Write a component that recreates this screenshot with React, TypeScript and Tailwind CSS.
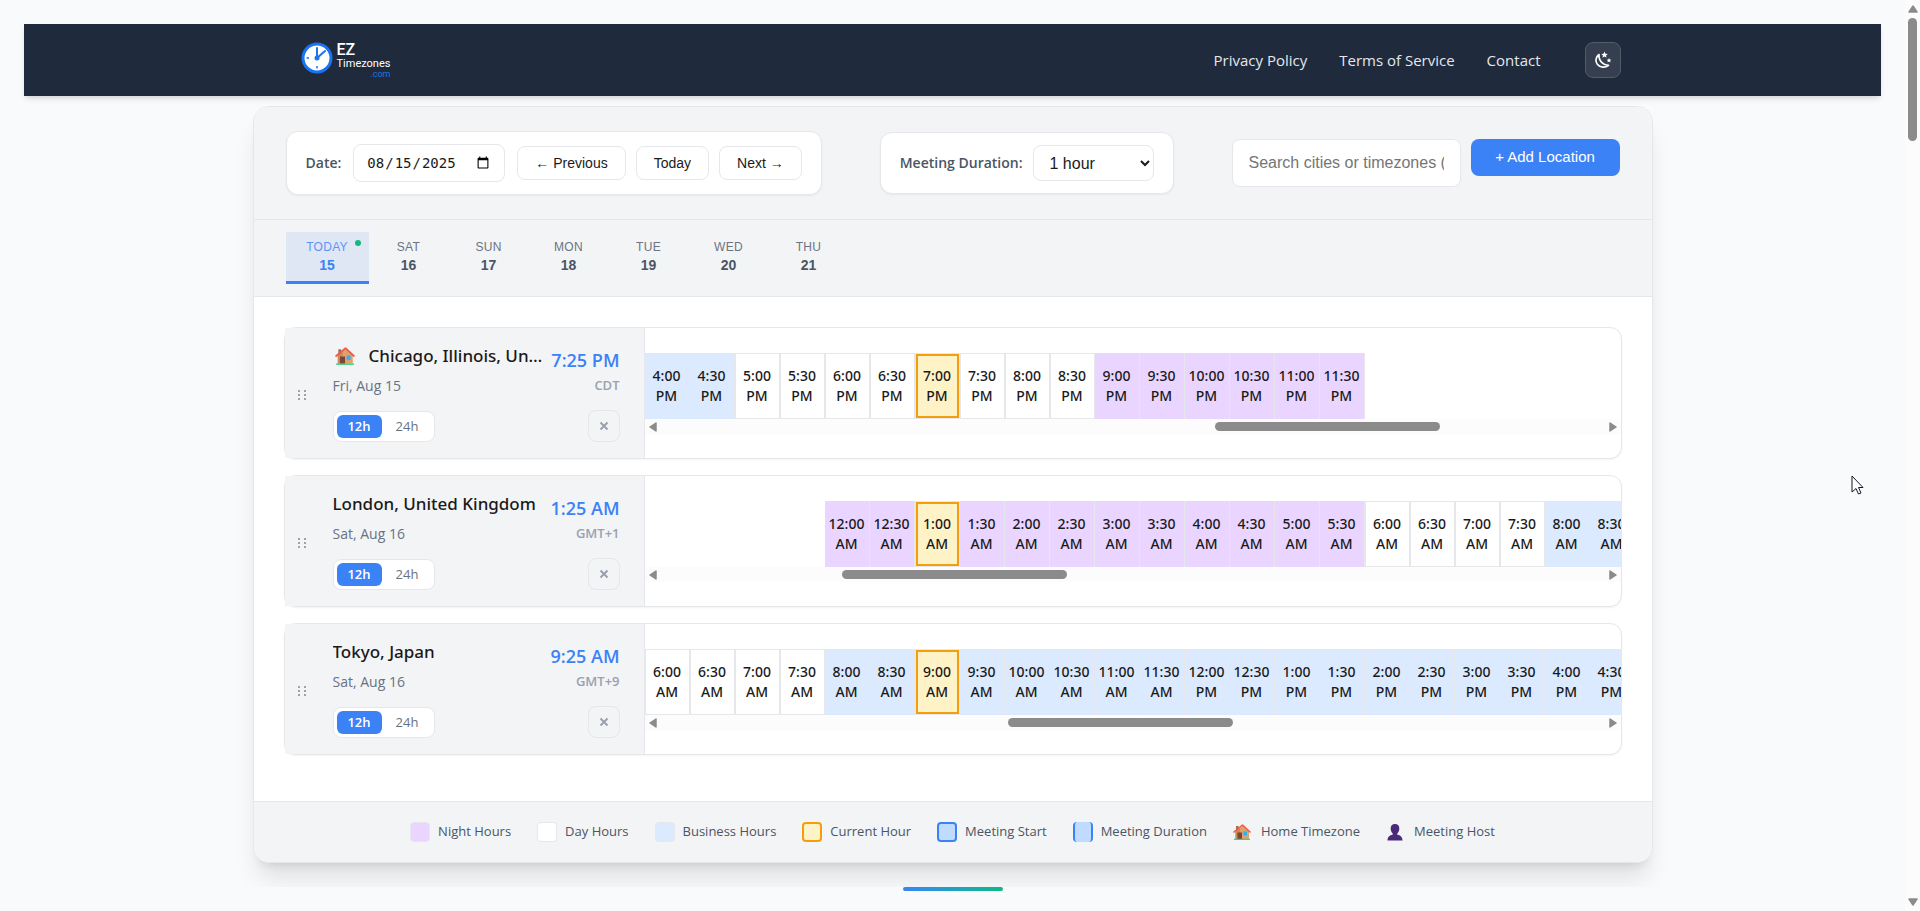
import type { ReactNode } from "react";

type SlotKind = "night" | "day" | "business" | "current";

interface Slot {
  time: string;
  period: string;
  kind: SlotKind;
}

interface Location {
  name: string;
  date: string;
  time: string;
  zone: string;
  home?: boolean;
  lead: number;
  start: number;
  count: number;
  current: number;
  thumb: { left: string; width: string };
}

const days = [
  { label: "Today", day: 15, active: true },
  { label: "Sat", day: 16 },
  { label: "Sun", day: 17 },
  { label: "Mon", day: 18 },
  { label: "Tue", day: 19 },
  { label: "Wed", day: 20 },
  { label: "Thu", day: 21 },
];

// start, count and current are in half hours since midnight
const locations: Location[] = [
  { name: "Chicago, Illinois, United States", date: "Fri, Aug 15", time: "7:25 PM", zone: "CDT", home: true, lead: 0, start: 32, count: 16, current: 38, thumb: { left: "58.7%", width: "23.7%" } },
  { name: "London, United Kingdom", date: "Sat, Aug 16", time: "1:25 AM", zone: "GMT+1", lead: 4, start: 0, count: 18, current: 2, thumb: { left: "19.4%", width: "23.7%" } },
  { name: "Tokyo, Japan", date: "Sat, Aug 16", time: "9:25 AM", zone: "GMT+9", lead: 0, start: 12, count: 22, current: 18, thumb: { left: "36.9%", width: "23.7%" } },
];

const slotStyles: Record<SlotKind, string> = {
  night: "border-r bg-[#e9d5ff]",
  business: "border-r bg-[#dbeafe]",
  day: "border bg-white",
  current: "border bg-[#fef3c7] inset-ring-2 inset-ring-[#f59e0b]",
};

function buildSlots({ start, count, current }: Location): Slot[] {
  return Array.from({ length: count }, (_, i) => {
    const half = start + i;
    const hour = Math.floor(half / 2);
    let kind: SlotKind = "day";
    if (half === current) kind = "current";
    else if (hour < 6 || hour >= 21) kind = "night";
    else if (hour >= 8 && hour < 17) kind = "business";
    return { time: `${hour % 12 || 12}:${half % 2 ? "30" : "00"}`, period: hour < 12 ? "AM" : "PM", kind };
  });
}

function HouseIcon({ className }: { className?: string }) {
  return (
    <svg viewBox="0 0 18 18" className={className} aria-hidden="true">
      <path d="M3 3h2.500v5H3z" fill="#a5694f" />
      <path d="M2.500 8.500 10 2.500l6 6V16H2.500z" fill="#e0a070" />
      <path d="M2.500 8.500 7 5v11H2.500z" fill="#c98a5e" />
      <path d="M4.500 9.500h4.500V16H4.500z" fill="#7d4533" />
      <path d="M10.500 8.500H14v4h-3.500z" fill="#28b4f0" />
      <path d="M1 9 9.500 2l7.500 7" fill="none" stroke="#ef5b45" strokeWidth="1.600" strokeLinecap="round" strokeLinejoin="round" />
      <path d="M1 15.700h16V17H1z" fill="#3fd07f" />
    </svg>
  );
}

function PersonIcon({ className }: { className?: string }) {
  return (
    <svg viewBox="0 0 18 18" className={className} aria-hidden="true">
      <path d="M9 1c2.900 0 4.300 1.700 4.300 4.500 0 2-.7 3.900-2 4.900v1.400c3 .6 5.200 2 5.200 5.700h-15c0-3.700 2.200-5.100 5.200-5.700v-1.400c-1.300-1-2-2.900-2-4.900C4.700 2.700 6.100 1 9 1z" fill="#4b2a78" />
    </svg>
  );
}

function Logo() {
  return (
    <a href="#" className="flex items-center gap-1 pl-4 font-['Roboto',sans-serif]">
      <svg viewBox="0 0 32 32" className="mb-1 size-8" aria-hidden="true">
        <circle cx="16" cy="16" r="14" fill="#fff" stroke="#1a73f0" strokeWidth="3" />
        <path d="M16 6v10l8-7" fill="none" stroke="#1a73f0" strokeWidth="2" strokeLinecap="round" />
        <circle cx="16" cy="16" r="2.500" fill="#1a73f0" />
        <path d="M5.500 16H8M16 24v2.500" stroke="#1a73f0" strokeWidth="1.500" />
      </svg>
      <span className="flex flex-col text-white">
        <span className="text-base leading-4 font-medium">EZ</span>
        <span className="text-[11px] leading-3">Timezones</span>
        <span className="self-end text-[9px] leading-2 text-[#1a73f0]">.com</span>
      </span>
    </a>
  );
}

function Header() {
  return (
    <header className="bg-[#1f2a3c] shadow-md">
      <div className="mx-auto flex h-18 max-w-[1400px] items-center justify-between px-8">
        <Logo />
        <nav className="flex items-center gap-8 text-[15px] text-[#e5e7eb]">
          <a href="#">Privacy Policy</a>
          <a href="#">Terms of Service</a>
          <a href="#">Contact</a>
          <button type="button" aria-label="Toggle dark mode" className="ml-3 flex size-9 items-center justify-center rounded-lg border border-[#525b69] bg-[#353f4f] text-white">
            <svg viewBox="0 0 20 20" className="size-5" fill="none" stroke="currentColor" strokeWidth="1.700" strokeLinejoin="round" aria-hidden="true">
              <path d="M6 4.500C2.500 7 2 11.500 4.500 14.500s7.500 3.500 11 .8C10.500 15.500 5.500 11 6 4.500z" />
              <path d="m11.500 1.500.9 2.200 2.400.2-1.800 1.600.5 2.300-2-1.200-2 1.200.5-2.300-1.800-1.600 2.400-.2zM16 8l.7 1.600 1.700.1-1.300 1.100.4 1.700-1.500-.9-1.500.9.4-1.700-1.300-1.100 1.700-.1z" fill="currentColor" strokeWidth="0" />
            </svg>
          </button>
        </nav>
      </div>
    </header>
  );
}

function NavButton({ children }: { children: ReactNode }) {
  return (
    <button type="button" className="h-[34px] rounded-lg border border-gray-200 bg-white px-[17px] font-['Liberation_Sans',sans-serif] text-sm text-[#1a1a1a]">
      {children}
    </button>
  );
}

function Controls() {
  return (
    <div className="flex flex-wrap items-center justify-between gap-4 border-b border-gray-200 px-8 py-6">
      <div className="flex items-center rounded-xl border border-gray-200 bg-white px-[19px] py-3 shadow-xs">
        <label htmlFor="date" className="mr-3 text-sm font-semibold text-gray-600">Date:</label>
        <input id="date" type="date" defaultValue="2025-08-15" className="mr-3 h-[38px] w-[152px] rounded-lg border border-gray-200 px-3 font-['DejaVu_Sans_Mono',monospace] text-sm text-[#1a1a1a]" />
        <div className="flex gap-2.5">
          <NavButton>← Previous</NavButton>
          <NavButton>Today</NavButton>
          <NavButton>Next →</NavButton>
        </div>
      </div>
      <div className="flex items-center gap-2.5 rounded-xl border border-gray-200 bg-white px-[19px] py-3 shadow-xs">
        <label htmlFor="duration" className="text-sm font-semibold text-gray-600">Meeting Duration:</label>
        <select id="duration" className="h-9 w-[121px] rounded-lg border border-gray-200 bg-white px-3 font-['Liberation_Sans',sans-serif] text-base text-[#1a1a1a]">
          <option>1 hour</option>
          <option>2 hours</option>
        </select>
      </div>
      <div className="flex items-start gap-2.5 font-['Liberation_Sans',sans-serif]">
        <input aria-label="Search locations" placeholder="Search cities or timezones (e.g. London)" className="h-12 w-[229px] rounded-lg border border-gray-200 bg-white px-4 text-base placeholder:text-[#757575]" />
        <button type="button" className="h-[37px] w-[149px] rounded-lg bg-[#3b82f6] text-[15px] text-white">+ Add Location</button>
      </div>
    </div>
  );
}

function DayTabs() {
  return (
    <div className="flex border-b border-gray-200 px-8 py-3 font-['Liberation_Sans',sans-serif]">
      {days.map(({ label, day, active }) => (
        <button
          key={day}
          type="button"
          className={`relative flex h-[52px] flex-col items-center border-b-3 pt-1.5 ${active ? "w-[83px] border-[#3b82f6] bg-[#dfe7f5] text-[#3b82f6]" : "w-20 border-transparent text-gray-600"}`}
        >
          <span className="text-xs leading-[18px] tracking-wide uppercase opacity-80">{label}</span>
          <span className="text-sm leading-[18px] font-bold">{day}</span>
          {active ? <span className="absolute top-2 right-2 size-1.5 rounded-full bg-[#10b981]" /> : null}
        </button>
      ))}
    </div>
  );
}

function Arrow({ className, d }: { className?: string; d: string }) {
  return (
    <svg viewBox="0 0 10 10" className={`size-2.5 shrink-0 ${className ?? ""}`} aria-hidden="true">
      <path d={d} fill="#8b8b8b" stroke="#8b8b8b" strokeWidth="1.500" strokeLinejoin="round" />
    </svg>
  );
}

function Timeline({ location }: { location: Location }) {
  return (
    <div className="min-w-0 flex-1 overflow-hidden pt-[25px]">
      <div className="flex">
        {Array.from({ length: location.lead }, (_, i) => (
          <div key={i} className="w-[45px] shrink-0" />
        ))}
        {buildSlots(location).map(({ time, period, kind }) => (
          <div key={time + period} className={`flex h-[66px] w-[45px] shrink-0 flex-col items-center justify-center border-gray-200 font-['Noto_Sans',sans-serif] text-sm leading-5 font-medium text-[#1a1a1a] ${slotStyles[kind]}`}>
            <span>{time}</span>
            <span>{period}</span>
          </div>
        ))}
      </div>
      <div className="flex h-[15px] items-center justify-between bg-[#fcfcfc] px-[3px]">
        <Arrow d="M8 1v8L2 5z" />
        <div className="relative h-[9px] flex-1">
          <div className="absolute h-full rounded-full bg-[#8b8b8b]" style={location.thumb} />
        </div>
        <Arrow d="M2 1v8l6-4z" />
      </div>
    </div>
  );
}

function DragHandle() {
  return (
    <svg viewBox="0 0 10 12" className="h-3 w-2.5" fill="#9ca3af" aria-hidden="true">
      <path d="M1 1h2v2H1zM7 1h2v2H7zM1 5h2v2H1zM7 5h2v2H7zM1 9h2v2H1zM7 9h2v2H7z" />
    </svg>
  );
}

function LocationRow({ location }: { location: Location }) {
  return (
    <div className="flex h-[132px] rounded-xl border border-gray-200 bg-white shadow-xs">
      <div className="flex w-[360px] shrink-0 border-r border-gray-200 bg-[#f3f4f6] pt-4 pr-6 pb-4">
        <div className="flex w-12 items-center pt-1 pl-3">
          <DragHandle />
        </div>
        <div className="flex min-w-0 flex-1 flex-col">
          <div className="flex h-7 items-center gap-2">
            {location.home ? <HouseIcon className="mr-1.5 mb-1 ml-0.5 size-5 shrink-0" /> : null}
            <span className="flex-1 truncate pb-1 font-['Noto_Sans',sans-serif] text-[17px] leading-6 font-medium text-[#1a1a1a]">{location.name}</span>
            <span className="pt-1 text-lg leading-6 font-semibold text-[#3b82f6]">{location.time}</span>
          </div>
          <div className="flex h-7 items-center justify-between">
            <span className="text-sm text-gray-500">{location.date}</span>
            <span className="text-[13px] font-semibold text-gray-400">{location.zone}</span>
          </div>
          <div className="mt-[10px] flex items-center justify-between">
            <div className="flex gap-0.5 rounded-lg border border-gray-200 bg-white p-[3px] text-[13px] leading-[23px]">
              <button type="button" className="w-[45px] rounded-md bg-[#3b82f6] font-semibold text-white">12h</button>
              <button type="button" className="w-[47px] rounded-md text-gray-500">24h</button>
            </div>
            <button type="button" aria-label={`Remove ${location.name}`} className="flex size-8 items-center justify-center rounded-lg border border-gray-200 text-gray-400">
              <svg viewBox="0 0 10 10" className="size-2.5" stroke="currentColor" strokeWidth="2" aria-hidden="true">
                <path d="m1.500 1.500 7 7M8.500 1.500l-7 7" />
              </svg>
            </button>
          </div>
        </div>
      </div>
      <Timeline location={location} />
    </div>
  );
}

function Legend() {
  const swatch = "size-5 rounded border border-gray-200";
  const items = [
    { label: "Night Hours", mark: <span className={`${swatch} bg-[#e9d5ff]`} /> },
    { label: "Day Hours", mark: <span className={`${swatch} bg-white`} /> },
    { label: "Business Hours", mark: <span className={`${swatch} bg-[#dbeafe]`} /> },
    { label: "Current Hour", mark: <span className="size-5 rounded border-2 border-[#f59e0b] bg-[#fef3c7]" /> },
    { label: "Meeting Start", mark: <span className="size-5 rounded border-2 border-[#3b82f6] bg-[#bfdbfe]" /> },
    { label: "Meeting Duration", mark: <span className="size-5 rounded border-x-2 border-[#3b82f6] bg-[#bfdbfe]" /> },
    { label: "Home Timezone", mark: <HouseIcon className="mr-0.5 size-[18px]" /> },
    { label: "Meeting Host", mark: <PersonIcon className="mr-0.5 size-[18px]" /> },
  ];
  return (
    <div className="flex h-[61px] items-center justify-center gap-[26px] rounded-b-2xl border-t border-gray-200 bg-[#f3f4f6] text-[13px] text-gray-600">
      {items.map(({ label, mark }) => (
        <div key={label} className="flex items-center gap-2">
          {mark}
          <span>{label}</span>
        </div>
      ))}
    </div>
  );
}

export default function App() {
  return (
    <div className="flex min-h-screen bg-[#f8fafc] font-['Open_Sans','Noto_Sans',sans-serif]">
      <div className="min-w-0 flex-1 px-6 pt-6">
        <Header />
        <main className="mx-auto mt-[10px] max-w-[1400px] rounded-2xl border border-gray-200 bg-white shadow-xl">
          <div className="rounded-t-2xl bg-[#f3f4f6]">
            <Controls />
            <DayTabs />
          </div>
          <div className="flex flex-col gap-4 px-[30px] pt-[30px] pb-[46px]">
            {locations.map((location) => (
              <LocationRow key={location.name} location={location} />
            ))}
          </div>
          <Legend />
        </main>
        <footer className="relative mt-6 bg-[#f8fafc] pb-5">
          <div className="mx-auto h-1 w-[100px] rounded-sm bg-linear-to-r from-[#3b82f6] to-[#10b981]" />
        </footer>
      </div>
      <div className="flex w-[15px] flex-col items-center bg-[#fcfcfc] py-1">
        <Arrow d="M1 8h8L5 2z" />
        <div className="mt-1 h-[123px] w-[9px] rounded-full bg-[#8b8b8b]" />
        <Arrow className="mt-auto" d="M1 2h8L5 8z" />
      </div>
      <svg viewBox="0 0 14 22" className="absolute top-[475px] left-[1851px] h-[22px] w-3.5" aria-hidden="true">
        <path d="M1 1v16l4-3.500 2.500 5.500 2.500-1-2.500-5.500H12z" fill="#fff" stroke="#111827" strokeWidth="1" />
      </svg>
    </div>
  );
}
